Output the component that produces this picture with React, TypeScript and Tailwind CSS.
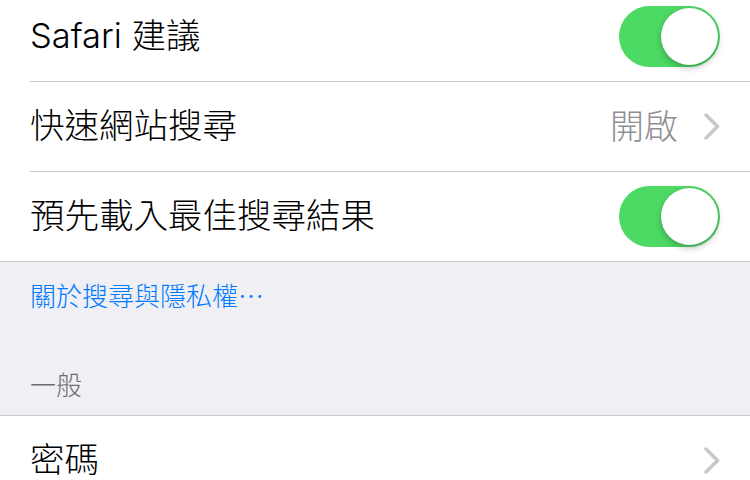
const font = { fontFamily: '"Inter", "Noto Sans CJK TC", sans-serif' };

function Toggle() {
  return (
    <div className="flex h-[61px] w-[101px] items-center justify-end rounded-full bg-[#4cd964] p-[2px]">
      <div className="h-[57px] w-[57px] rounded-full bg-white shadow-[0_3px_6px_rgba(0,0,0,0.25),0_0_1px_rgba(0,0,0,0.2)]" />
    </div>
  );
}

function Chevron() {
  return (
    <svg width="16" height="27" viewBox="0 0 16 27" className="shrink-0">
      <polyline points="2,2 13.5,13.5 2,25" fill="none" stroke="#c7c7cc" strokeWidth="3.5" strokeLinecap="round" strokeLinejoin="round" />
    </svg>
  );
}

function Row({ label, right, last }: { label: string; right: React.ReactNode; last?: boolean }) {
  return (
    <div className="pl-[30px]">
      <div className={`flex items-center justify-between pr-[30px] ${last ? 'h-[89px]' : 'h-[90px] border-b border-[#c8c7cc]'}`}>
        <span className="text-[34.5px] font-light leading-none text-black">{label}</span>
        {right}
      </div>
    </div>
  );
}

export default function App() {
  return (
    <div className="h-[480px] w-[750px] overflow-hidden bg-[#efeff4]" style={font}>
      <div className="-mt-[8px] border-b border-[#c8c7cc] bg-white">
        <Row label="Safari 建議" right={<Toggle />} />
        <Row
          label="快速網站搜尋"
          right={
            <div className="flex items-center gap-[26px]">
              <span className="text-[34px] font-light leading-none text-[#8e8e93]">開啟</span>
              <Chevron />
            </div>
          }
        />
        <Row label="預先載入最佳搜尋結果" right={<Toggle />} last />
      </div>

      <div className="h-[154px] border-b border-[#c8c7cc] px-[30px] font-light">
        <div className="pt-[19px] text-[26px] leading-[32px] text-[#007aff]">關於搜尋與隱私權⋯</div>
        <div className="pt-[57px] text-[26px] leading-[32px] text-[#6d6d72]">一般</div>
      </div>

      <div className="bg-white">
        <Row label="密碼" right={<Chevron />} last />
      </div>
    </div>
  );
}
